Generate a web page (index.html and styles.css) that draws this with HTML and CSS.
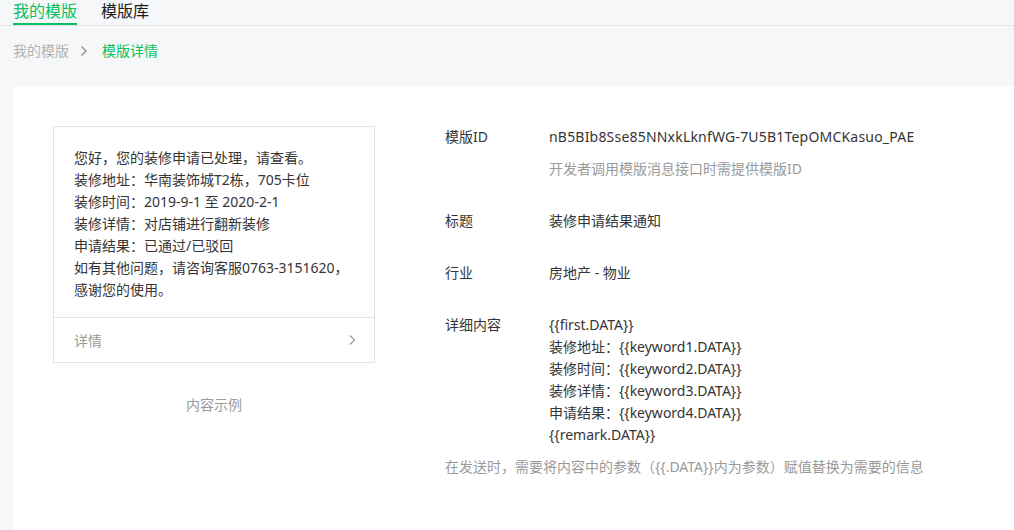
FILE: index.html
```html
<!DOCTYPE html>
<html lang="zh-CN">
<head>
<meta charset="utf-8">
<title>模版详情</title>
<link rel="stylesheet" href="styles.css">
</head>
<body>
<div class="tabs">
  <a class="tab active">我的模版</a>
  <a class="tab">模版库</a>
</div>
<div class="crumbs">
  <span class="crumb">我的模版</span>
  <svg class="crumb-sep" width="8" height="12" viewBox="0 0 8 12"><polyline points="1.5,1.5 6,6 1.5,10.5" fill="none" stroke="#8a8a8a" stroke-width="1.3"/></svg>
  <span class="crumb current">模版详情</span>
</div>
<div class="panel">
  <div class="preview">
    <div class="card">
      <div class="card-body">
        <p>您好，您的装修申请已处理，请查看。</p>
        <p>装修地址：华南装饰城T2栋，705卡位</p>
        <p>装修时间：2019-9-1 至 2020-2-1</p>
        <p>装修详情：对店铺进行翻新装修</p>
        <p>申请结果：已通过/已驳回</p>
        <p>如有其他问题，请咨询客服0763-3151620，</p>
        <p>感谢您的使用。</p>
      </div>
      <div class="card-foot">
        <span>详情</span>
        <svg width="7" height="12" viewBox="0 0 7 12"><polyline points="1,1.5 5.5,6 1,10.5" fill="none" stroke="#9a9a9a" stroke-width="1.2"/></svg>
      </div>
    </div>
    <div class="preview-label">内容示例</div>
  </div>
  <div class="info">
    <div class="row">
      <div class="label">模版ID</div>
      <div class="value">
        <div class="id">nB5BIb8Sse85NNxkLknfWG-7U5B1TepOMCKasuo_PAE</div>
        <div class="hint">开发者调用模版消息接口时需提供模版ID</div>
      </div>
    </div>
    <div class="row">
      <div class="label">标题</div>
      <div class="value">装修申请结果通知</div>
    </div>
    <div class="row">
      <div class="label">行业</div>
      <div class="value">房地产 - 物业</div>
    </div>
    <div class="row last">
      <div class="label">详细内容</div>
      <div class="value">
        <div>{{first.DATA}}</div>
        <div>装修地址：{{keyword1.DATA}}</div>
        <div>装修时间：{{keyword2.DATA}}</div>
        <div>装修详情：{{keyword3.DATA}}</div>
        <div>申请结果：{{keyword4.DATA}}</div>
        <div>{{remark.DATA}}</div>
      </div>
    </div>
    <div class="note">在发送时，需要将内容中的参数（{{.DATA}}内为参数）赋值替换为需要的信息</div>
  </div>
</div>
</body>
</html>
```

FILE: styles.css
```css
* { box-sizing: border-box; }
html, body { margin: 0; padding: 0; }
body {
  background: #f6f7f9;
  font-family: "Noto Sans", "Noto Sans CJK SC", sans-serif;
  color: #353535;
  font-size: 14px;
  overflow: hidden;
  height: 530px;
}
.tabs {
  display: flex;
  gap: 24px;
  padding-left: 13px;
  border-bottom: 1px solid #e3e4e6;
  height: 26px;
}
.tab {
  font-size: 16px;
  line-height: 22px;
  height: 25px;
  color: #1a1a1a;
  cursor: pointer;
}
.tab.active {
  color: #07c160;
  border-bottom: 2px solid #07c160;
}
.crumbs {
  display: flex;
  padding: 15px 0 0 13px;
  height: 60px;
  align-items: flex-start;
  line-height: 20px;
}
.crumb { color: #b2b2b2; }
.crumb.current { color: #07c160; }
.crumb-sep { margin: 4px 14px 0 11px; }
.panel {
  margin-left: 13px;
  background: #fff;
  border-radius: 4px 0 0 0;
  height: 460px;
  display: flex;
  padding: 40px 0 0 40px;
}
.preview { width: 322px; flex: none; }
.card {
  border: 1px solid #e4e4e4;
}
.card-body {
  padding: 20px 20px 16px 20px;
  line-height: 22px;
}
.card-body p { margin: 0; white-space: nowrap; }
.card-foot {
  border-top: 1px solid #e4e4e4;
  height: 45px;
  display: flex;
  align-items: center;
  justify-content: space-between;
  padding: 0 18px 0 20px;
  color: #9a9a9a;
}
.preview-label {
  margin-top: 32px;
  text-align: center;
  color: #9a9a9a;
  line-height: 20px;
}
.info {
  margin-left: 70px;
  line-height: 22px;
}
.row {
  display: flex;
  margin-bottom: 30px;
}
.row.last { margin-bottom: 10px; }
.label { width: 104px; flex: none; }
.id { letter-spacing: 0.2px; }
.hint { color: #9a9a9a; margin-top: 10px; }
.note { color: #9a9a9a; }
```
